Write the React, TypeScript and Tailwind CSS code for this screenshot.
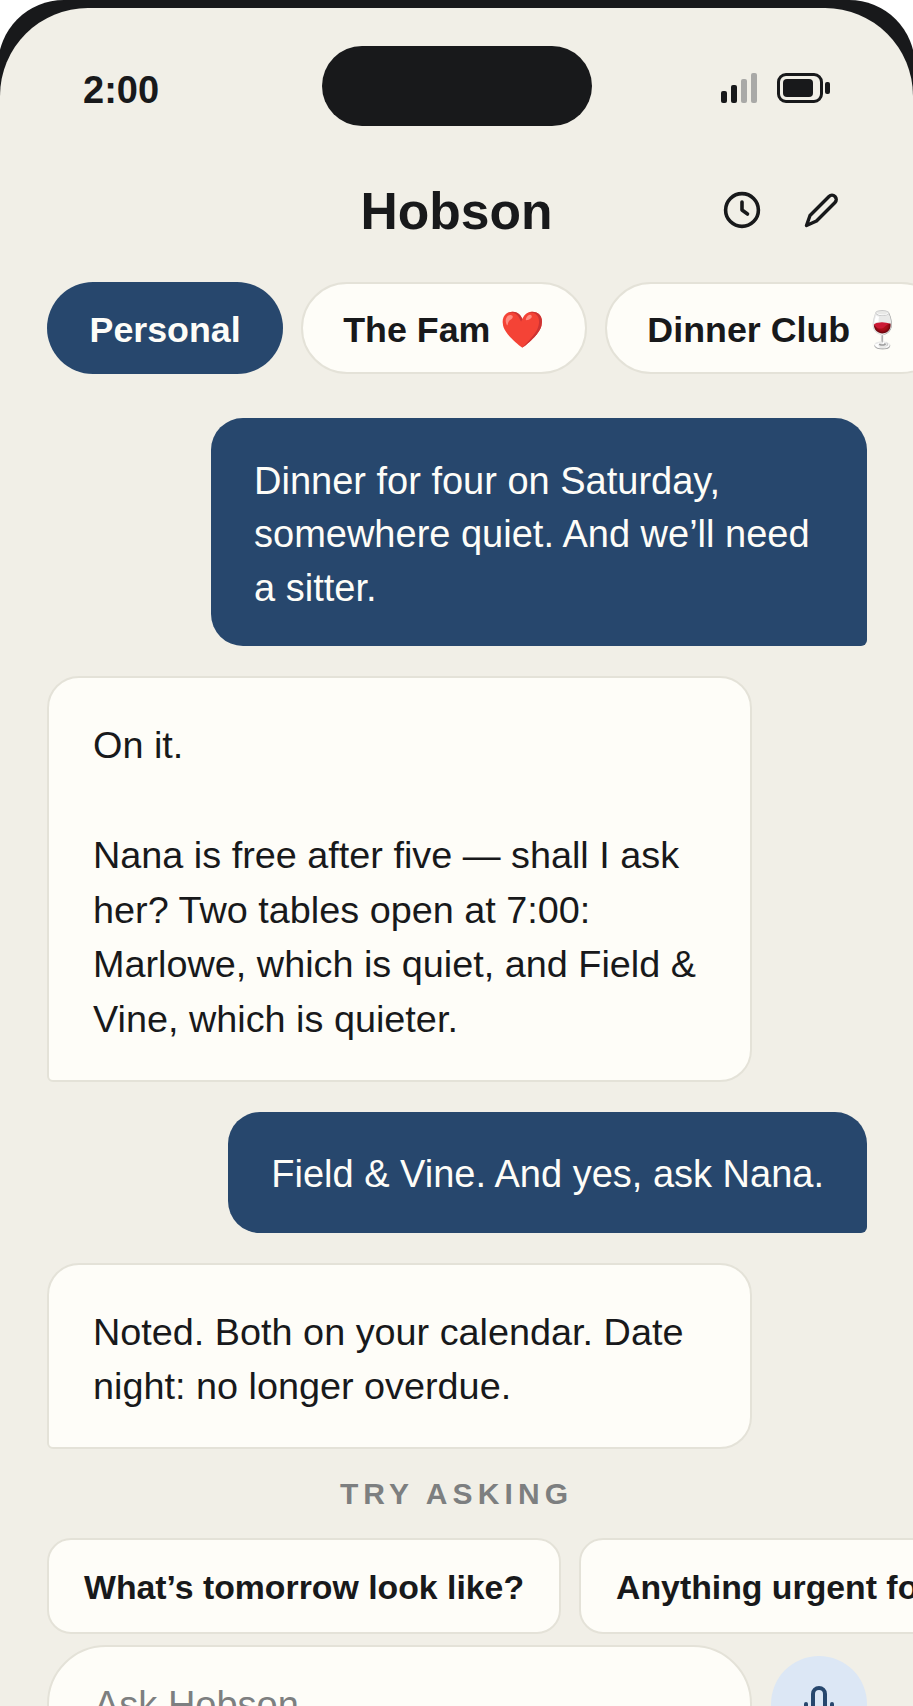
import React from 'react';

const tabs = ['The Fam ❤️', 'Dinner Club 🍷'];

const StatusIcons = () => (
  <div className="flex items-center gap-[20px]">
    <div className="flex items-end gap-[4px] h-[30px]">
      <div className="w-[6px] h-[12px] rounded-[2px] bg-[#18191b]"></div>
      <div className="w-[6px] h-[18px] rounded-[2px] bg-[#18191b]"></div>
      <div className="w-[6px] h-[24px] rounded-[2px] bg-[#a9a9a7]"></div>
      <div className="w-[6px] h-[30px] rounded-[2px] bg-[#a9a9a7]"></div>
    </div>
    <div className="flex items-center gap-[2px]">
      <div className="w-[46px] h-[30px] rounded-[9px] border-[3px] border-[#18191b] p-[3px]">
        <div className="w-[30px] h-full rounded-[4px] bg-[#18191b]"></div>
      </div>
      <div className="w-[5px] h-[12px] rounded-[2px] bg-[#18191b]"></div>
    </div>
  </div>
);

const ClockIcon = () => (
  <svg width="40" height="40" viewBox="0 0 40 40" fill="none" stroke="#18191b" strokeWidth="3.6" strokeLinecap="round" strokeLinejoin="round">
    <circle cx="20" cy="20" r="16.4" />
    <path d="M20 12v8l5.5 4" />
  </svg>
);

const PencilIcon = () => (
  <svg width="40" height="40" viewBox="0 0 40 40" fill="none" stroke="#18191b" strokeWidth="3.4" strokeLinejoin="round">
    <path d="M5.5 35.5L9 25.5L28 6.5A4.2 4.2 0 0 1 34 12.5L15.5 31Z" />
  </svg>
);

const MicIcon = () => (
  <svg width="48" height="48" viewBox="0 0 48 48" fill="none" stroke="#27476d" strokeWidth="4" strokeLinecap="round">
    <path d="M24 8a6 6 0 0 0-6 6v12a6 6 0 0 0 12 0V14a6 6 0 0 0-6-6z" />
    <path d="M11 24v2a13 13 0 0 0 26 0v-2" />
  </svg>
);

const UserBubble: React.FC<{ children: React.ReactNode }> = ({ children }) => (
  <div className="self-end max-w-[656px] bg-[#27476d] text-[#fefdf8] text-[38px] leading-[53.7px] rounded-[32px] rounded-br-[6px] px-[43px] pt-[36.5px] pb-[30.5px]">
    {children}
  </div>
);

const BotBubble: React.FC<{ children: React.ReactNode }> = ({ children }) => (
  <div className="w-[705px] bg-[#fefdf8] border-2 border-[#e4e2d8] text-[#18191b] text-[37.8px] leading-[54.8px] rounded-[32px] rounded-bl-[6px] px-[44px] pt-[40px] pb-[33px]">
    {children}
  </div>
);

export default function App() {
  return (
    <div className="w-[913px] h-[1706px] overflow-hidden bg-white font-['Liberation_Sans',sans-serif]">
      <div className="-ml-[2px] w-[917px] h-[1780px] pt-[8px] pl-[2px] pr-[2px] bg-[#18191b] rounded-t-[66px]">
        <div className="relative h-[1780px] bg-[#f1efe7] rounded-t-[88px] overflow-hidden">
          {/* Dynamic island */}
          <div className="absolute left-[322px] top-[38px] w-[270px] h-[80px] rounded-full bg-[#18191b]"></div>

          <div className="flex items-center justify-between pl-[83px] pr-[83px] pt-[30px] h-[130px]">
            <span className="mt-[4px] text-[38px] leading-[34px] font-bold text-[#18191b]">2:00</span>
            <StatusIcons />
          </div>

          {/* Header */}
          <div className="relative flex justify-center items-center h-[60px] mt-[43px]">
            <h1 className="text-[51.6px] leading-[60px] font-bold text-[#18191b]">Hobson</h1>
            <div className="absolute right-[72px] top-[9px] flex items-center gap-[39px]">
              <ClockIcon />
              <PencilIcon />
            </div>
          </div>

          {/* Tabs */}
          <div className="flex gap-[18px] pl-[47px] mt-[41px] overflow-hidden">
            <div className="shrink-0 h-[92px] pt-[5px] px-[42.5px] flex items-center rounded-[46px] bg-[#27476d] text-[#fefdf8] text-[35.8px] font-bold">Personal</div>
            {tabs.map(tab => (
              <div key={tab} className="shrink-0 h-[92px] pt-[5px] px-[40px] flex items-center rounded-[46px] bg-[#fefdf8] border-2 border-[#e4e2d8] text-[#18191b] text-[35.8px] font-bold whitespace-nowrap">{tab}</div>
            ))}
          </div>

          {/* Conversation */}
          <div className="flex flex-col gap-[30px] pl-[47px] pr-[46px] mt-[44px]">
            <UserBubble>Dinner for four on Saturday, somewhere quiet. And we’ll need a sitter.</UserBubble>
            <BotBubble>
              On it.<br /><br />Nana is free after five — shall I ask her? Two tables open at 7:00: Marlowe, which is quiet, and Field &amp; Vine, which is quieter.
            </BotBubble>
            <UserBubble>Field &amp; Vine. And yes, ask Nana.</UserBubble>
            <BotBubble>Noted. Both on your calendar. Date night: no longer overdue.</BotBubble>
          </div>

          <div className="text-center text-[#7d7f80] text-[30px] leading-[34px] font-bold tracking-[5.1px] mt-[28px]">TRY ASKING</div>

          {/* Suggestions */}
          <div className="flex gap-[18px] pl-[47px] mt-[27px] overflow-hidden">
            <div className="shrink-0 h-[96px] pt-[3px] px-[35px] flex items-center rounded-[24px] bg-[#fefdf8] border-2 border-[#e4e2d8] text-[#18191b] text-[33.8px] font-bold whitespace-nowrap">What’s tomorrow look like?</div>
            <div className="shrink-0 h-[96px] pt-[3px] px-[35px] flex items-center rounded-[24px] bg-[#fefdf8] border-2 border-[#e4e2d8] text-[#18191b] text-[33.8px] font-bold whitespace-nowrap">Anything urgent for today?</div>
          </div>

          {/* Input */}
          <div className="flex items-center gap-[19px] pl-[47px] pr-[46px] mt-[11px]">
            <div className="w-[705px] h-[118px] shrink-0 pt-[3px] flex items-center rounded-[59px] bg-[#fefdf8] border-2 border-[#e4e2d8] pl-[45px] text-[38px] text-[#7d7f80]">Ask Hobson</div>
            <div className="w-[96px] h-[96px] shrink-0 rounded-full bg-[#dce7f5] flex items-center justify-center">
              <MicIcon />
            </div>
          </div>
        </div>
      </div>
    </div>
  );
}
